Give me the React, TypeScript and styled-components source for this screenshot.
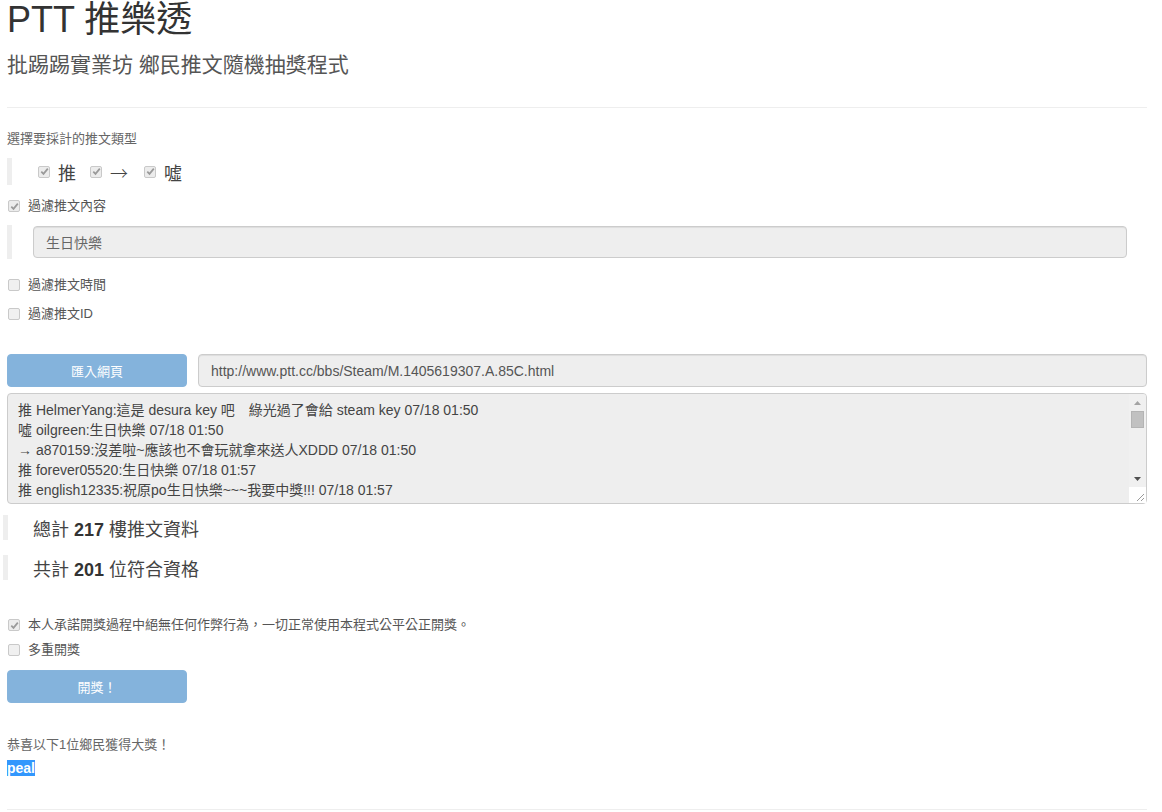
import React from "react";
import styled, { createGlobalStyle } from "styled-components";

const GlobalStyle = createGlobalStyle`
  html, body { margin: 0; padding: 0; background: #fff; }
  body {
    font-family: "Liberation Sans", Arial, "Noto Sans CJK TC", sans-serif;
    font-size: 13px;
    color: #333;
  }
  * { box-sizing: border-box; }
`;

const FONT = `"Liberation Sans", Arial, "Noto Sans CJK TC", sans-serif`;

const Page = styled.div`
  display: flex;
  flex-direction: column;
  padding: 0 15px 0 7px;
  width: 1162px;
`;

const Title = styled.h1`
  margin: 0;
  font-family: ${FONT};
  font-size: 36px;
  line-height: 40px;
  font-weight: 400;
  color: #333;
`;

const Subtitle = styled.div`
  margin-top: 13px;
  font-size: 21px;
  line-height: 23px;
  color: #555;
`;

const Divider = styled.hr<{ $top: number }>`
  margin: ${(p) => p.$top}px 0 0;
  border: 0;
  border-top: 1px solid #eee;
  height: 0;
`;

const Label = styled.div<{ $top: number }>`
  margin-top: ${(p) => p.$top}px;
  font-size: 13px;
  line-height: 20px;
  color: #666;
`;

const Quote = styled.blockquote<{ $top: number; $h: number; $pad: string; $shift?: number }>`
  margin: ${(p) => p.$top}px 0 0 ${(p) => p.$shift ?? 0}px;
  height: ${(p) => p.$h}px;
  padding: ${(p) => p.$pad};
  border-left: 5px solid #eee;
  display: flex;
  align-items: center;
`;

const TypeOption = styled.label<{ $gap: number }>`
  display: flex;
  align-items: center;
  gap: 8px;
  margin-right: ${(p) => p.$gap}px;
  font-size: 18px;
  color: #444;
`;

const Arrow = styled.span`
  font-family: "Noto Sans CJK TC", sans-serif;
  font-size: 18px;
  font-weight: 300;
`;

const Box = styled.span<{ $checked: boolean }>`
  width: 12px;
  height: 12px;
  flex: none;
  display: inline-flex;
  align-items: center;
  justify-content: center;
  border: 1px solid #c9c9c9;
  border-radius: 2px;
  background: ${(p) => (p.$checked ? "#ececec" : "#f0f0f0")};
`;

const CheckBox = ({ checked }: { checked: boolean }) => (
  <Box $checked={checked}>
    {checked && (
      <svg width="9" height="9" viewBox="0 0 9 9">
        <path d="M1.3 4.6 L3.5 6.9 L7.8 1.6" fill="none" stroke="#9a9a9a" strokeWidth="1.7" />
      </svg>
    )}
  </Box>
);

const CheckRow = styled.label<{ $top: number }>`
  margin-top: ${(p) => p.$top}px;
  height: 20px;
  display: flex;
  align-items: center;
  gap: 8px;
  padding-left: 1px;
  font-size: 13px;
  line-height: 20px;
  color: #555;
`;

const Field = styled.div<{ $h: number; $size: number; $color: string }>`
  flex: 1;
  height: ${(p) => p.$h}px;
  display: flex;
  align-items: center;
  padding: 0 12px;
  background: #eee;
  border: 1px solid #ccc;
  border-radius: 4px;
  box-shadow: inset 0 1px 1px rgba(0, 0, 0, 0.075);
  font-size: ${(p) => p.$size}px;
  color: ${(p) => p.$color};
`;

const Row = styled.div<{ $top: number }>`
  margin-top: ${(p) => p.$top}px;
  display: flex;
  gap: 11px;
`;

const Button = styled.button<{ $top?: number }>`
  margin-top: ${(p) => p.$top ?? 0}px;
  width: 180px;
  height: 33px;
  flex: none;
  border: 1px solid #86b4dc;
  border-radius: 4px;
  background: #84b3dc;
  color: #fff;
  font-family: ${FONT};
  font-size: 13px;
  padding: 0;
  cursor: not-allowed;
`;

const CommentsWrap = styled.div`
  position: relative;
  margin-top: 6px;
  width: 1140px;
  height: 111px;
`;

const Comments = styled.textarea`
  display: block;
  width: 100%;
  height: 100%;
  padding: 6px 30px 6px 10px;
  background: #eee;
  border: 1px solid #ccc;
  border-radius: 4px;
  font-family: ${FONT};
  font-size: 14px;
  line-height: 20px;
  color: #444;
  resize: none;
  outline: none;
  overflow: hidden;
`;

const Rail = styled.div`
  position: absolute;
  top: 1px;
  right: 1px;
  bottom: 1px;
  width: 17px;
  display: flex;
  flex-direction: column;
  background: #f0f0f0;
  border-radius: 0 3px 3px 0;
`;

const RailButton = styled.div`
  height: 17px;
  flex: none;
  display: flex;
  align-items: center;
  justify-content: center;
`;

const Track = styled.div`
  flex: 1;
  padding: 0 2px;
`;

const Thumb = styled.div`
  height: 17px;
  background: #c1c1c1;
  border: 1px solid #b4b4b4;
`;

const Corner = styled.div`
  height: 16px;
  flex: none;
  background: #fff;
  display: flex;
  align-items: flex-end;
  justify-content: flex-end;
  padding: 0 2px 2px 0;
`;

const Stat = styled.span`
  font-size: 18px;
  color: #444;
  b { font-weight: 700; color: #333; }
`;

const Winner = styled.div`
  margin-top: 3px;
  line-height: 20px;
  font-size: 14px;
`;

const Selected = styled.span`
  background: #3297fd;
  color: #fff;
  font-weight: 700;
`;

const head = [
  "推 HelmerYang:這是 desura key 吧　綠光過了會給 steam key 07/18 01:50",
  "噓 oilgreen:生日快樂 07/18 01:50",
  "→ a870159:沒差啦~應該也不會玩就拿來送人XDDD 07/18 01:50",
  "推 forever05520:生日快樂 07/18 01:57",
  "推 english12335:祝原po生日快樂~~~我要中獎!!! 07/18 01:57",
];
const filler = Array.from({ length: 212 }, (_, i) => {
  const m = String(58 + (i % 2)).padStart(2, "0");
  return `推 user${1000 + i}:生日快樂 07/18 01:${m}`;
});
const commentText = [...head, ...filler].join("\n");

export default function App() {
  return (
    <>
      <GlobalStyle />
      <Page>
        <Title>PTT 推樂透</Title>
        <Subtitle>批踢踢實業坊 鄉民推文隨機抽獎程式</Subtitle>
        <Divider $top={31} />

        <Label $top={21}>選擇要採計的推文類型</Label>
        <Quote $top={9} $h={27} $pad="0 0 0 26px">
          <TypeOption $gap={14}>
            <CheckBox checked />
            推
          </TypeOption>
          <TypeOption $gap={16}>
            <CheckBox checked />
            <Arrow>→</Arrow>
          </TypeOption>
          <TypeOption $gap={0}>
            <CheckBox checked />
            噓
          </TypeOption>
        </Quote>

        <CheckRow $top={11}>
          <CheckBox checked />
          過濾推文內容
        </CheckRow>
        <Quote $top={9} $h={34} $pad="1px 20px 1px 21px">
          <Field $h={32} $size={14} $color="#666">生日快樂</Field>
        </Quote>

        <CheckRow $top={16}>
          <CheckBox checked={false} />
          過濾推文時間
        </CheckRow>
        <CheckRow $top={9}>
          <CheckBox checked={false} />
          過濾推文ID
        </CheckRow>

        <Row $top={30}>
          <Button disabled>匯入網頁</Button>
          <Field $h={33} $size={14} $color="#555">
            http://www.ptt.cc/bbs/Steam/M.1405619307.A.85C.html
          </Field>
        </Row>
        <CommentsWrap>
          <Comments readOnly value={commentText} />
          <Rail>
            <RailButton>
              <svg width="7" height="4" viewBox="0 0 7 4">
                <path d="M0 4 L3.5 0 L7 4 Z" fill="#a3a3a3" />
              </svg>
            </RailButton>
            <Track>
              <Thumb />
            </Track>
            <RailButton>
              <svg width="7" height="4" viewBox="0 0 7 4">
                <path d="M0 0 L3.5 4 L7 0 Z" fill="#505050" />
              </svg>
            </RailButton>
            <Corner>
              <svg width="8" height="8" viewBox="0 0 8 8">
                <path d="M8 1 L1 8 M8 5 L5 8" stroke="#9a9a9a" strokeWidth="1" />
              </svg>
            </Corner>
          </Rail>
        </CommentsWrap>

        <Quote $top={11} $h={25} $pad="0 0 0 25px" $shift={-4}>
          <Stat>
            總計 <b>217</b> 樓推文資料
          </Stat>
        </Quote>
        <Quote $top={15} $h={25} $pad="0 0 0 25px" $shift={-4}>
          <Stat>
            共計 <b>201</b> 位符合資格
          </Stat>
        </Quote>

        <CheckRow $top={35}>
          <CheckBox checked />
          本人承諾開獎過程中絕無任何作弊行為，一切正常使用本程式公平公正開獎。
        </CheckRow>
        <CheckRow $top={5}>
          <CheckBox checked={false} />
          多重開獎
        </CheckRow>
        <Button $top={10} disabled>
          開獎！
        </Button>

        <Label $top={32}>恭喜以下1位鄉民獲得大獎！</Label>
        <Winner>
          <Selected>peal</Selected>
        </Winner>
        <Divider $top={31} />
      </Page>
    </>
  );
}
